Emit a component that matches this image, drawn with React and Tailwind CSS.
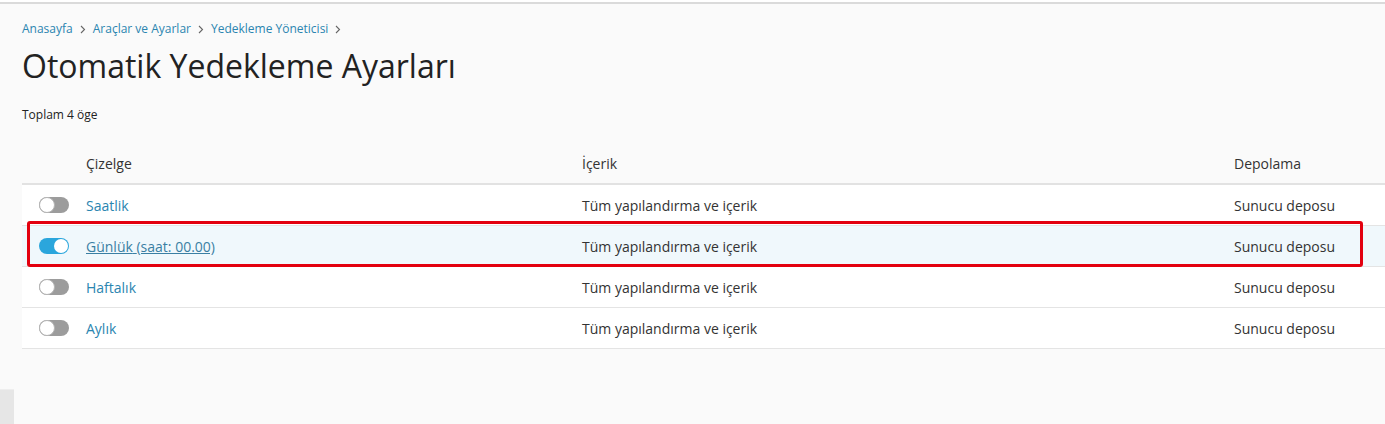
import React from "react";

function Toggle({ on }) {
  return on ? (
    <div className="relative w-[30px] h-[16px] rounded-full bg-[#2ba6dc]">
      <div className="absolute right-[1px] top-[1px] w-[14px] h-[14px] rounded-full bg-white" />
    </div>
  ) : (
    <div className="relative w-[30px] h-[16px] rounded-full bg-[#9c9c9c]">
      <div className="absolute left-0 top-0 w-[16px] h-[16px] rounded-full bg-white border border-[#b5b5b5]" />
    </div>
  );
}

function Chevron() {
  return (
    <svg width="6" height="9" viewBox="0 0 6 9" className="ml-[7px] mr-[7px]" fill="none">
      <path d="M1 1l3.5 3.5L1 8" stroke="#666" strokeWidth="1.1" />
    </svg>
  );
}

const rows = [
  { name: "Saatlik", on: false },
  { name: "Günlük", extra: "(saat: 00.00)", on: true },
  { name: "Haftalık", on: false },
  { name: "Aylık", on: false },
];

export default function App() {
  return (
    <div className="relative min-h-[424px] bg-[#fafafa] font-['Open_Sans',sans-serif] text-[#333] overflow-hidden">
      <div className="h-[4px] bg-white border-b-2 border-[#dadada]" />
      <div className="pl-[22px]">
        <nav className="mt-[17px] flex items-center text-[12px] leading-[16px] text-[#2a85b0]">
          <span>Anasayfa</span>
          <Chevron />
          <span>Araçlar ve Ayarlar</span>
          <Chevron />
          <span>Yedekleme Yöneticisi</span>
          <Chevron />
        </nav>
        <h1 className="mt-[11px] text-[32px] leading-[36px] text-[#222] font-normal">
          Otomatik Yedekleme Ayarları
        </h1>
        <div className="mt-[23px] text-[12px] leading-[16px] text-[#222]">Toplam 4 öge</div>
        <div className="mt-[20px] text-[14px]">
          <div className="grid grid-cols-[64px_496px_652px_1fr] h-[42px] items-center border-b-2 border-[#e2e2e2] text-[#333]">
            <div />
            <div>Çizelge</div>
            <div>İçerik</div>
            <div>Depolama</div>
          </div>
          {rows.map((r) => (
            <div
              key={r.name}
              className={`grid grid-cols-[64px_496px_652px_1fr] h-[41px] items-center border-b border-[#e4e4e4] ${
                r.on ? "bg-[#f0f8fc]" : "bg-white"
              }`}
            >
              <div className="pl-[17px]">
                <Toggle on={r.on} />
              </div>
              <div className="text-[#2a85b0]">
                {r.extra ? (
                  <span className="underline text-[#3a7fa3]">
                    {r.name} {r.extra}
                  </span>
                ) : (
                  r.name
                )}
              </div>
              <div>Tüm yapılandırma ve içerik</div>
              <div>Sunucu deposu</div>
            </div>
          ))}
        </div>
      </div>
      <div className="absolute left-[27px] top-[221px] w-[1336px] h-[46px] border-[3px] border-[#e3000f] rounded-[3px] pointer-events-none" />
      <div className="absolute left-0 top-[389px] w-[14px] h-[40px] bg-[#e6e6e6] border-t border-[#eeeeee]" />
    </div>
  );
}
